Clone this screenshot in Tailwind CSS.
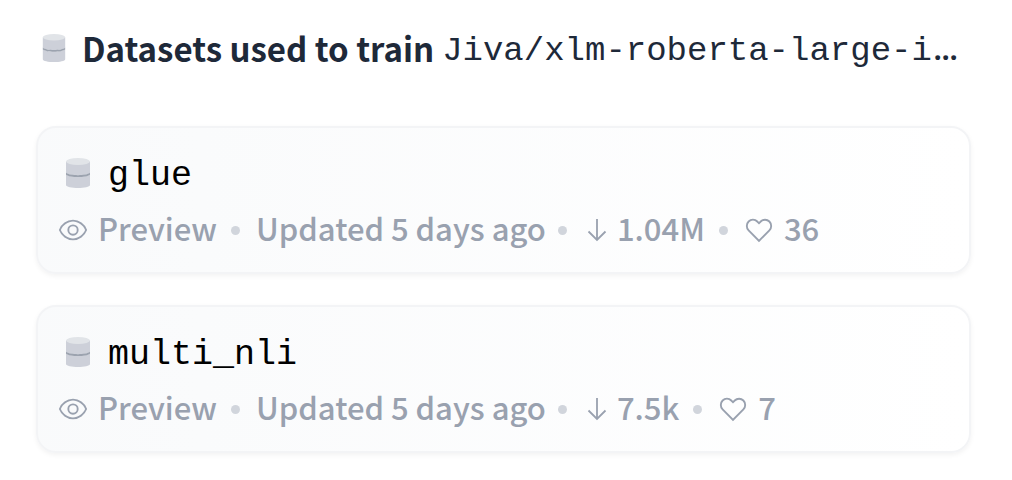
<!DOCTYPE html>
<html lang="en">
<head>
<meta charset="utf-8">
<meta name="viewport" content="width=device-width, initial-scale=1">
<title>Datasets used to train</title>
<script src="https://cdn.jsdelivr.net/npm/@tailwindcss/browser@4"></script>
</head>
<body class="bg-white font-['Noto_Sans_CJK_JP',sans-serif]">
<svg class="hidden" aria-hidden="true">
  <symbol id="db" viewBox="0 0 24 30">
    <path d="M0 16.500C4 19.500 20 19.500 24 16.500V27C24 31 0 31 0 27Z" fill="#cdd0d9"/>
    <path d="M0 3.500H24V15C20 18 4 18 0 15Z" fill="#cdd0d9"/>
    <path d="M0 14.800C4 18 20 18 24 14.800V16.700C20 19.900 4 19.900 0 16.700Z" fill="#9ca3af"/>
    <ellipse cx="12" cy="3.500" rx="12" ry="3.500" fill="#e1e4e8"/>
  </symbol>
  <symbol id="eye" viewBox="0 0 32 32">
    <path d="M30.940 15.660A16.690 16.690 0 0 0 16 5 16.690 16.690 0 0 0 1.060 15.660a1 1 0 0 0 0 .680A16.690 16.690 0 0 0 16 27a16.690 16.690 0 0 0 14.940-10.660 1 1 0 0 0 0-.680ZM16 25c-5.300 0-10.900-3.930-12.930-9C5.100 10.930 10.700 7 16 7s10.900 3.930 12.930 9C26.900 21.070 21.300 25 16 25Zm0-15a6 6 0 1 0 0 12 6 6 0 0 0 0-12Zm0 10a4 4 0 1 1 0-8 4 4 0 0 1 0 8Z" fill="currentColor"/>
  </symbol>
  <symbol id="down" viewBox="0 0 20 24">
    <path d="M10 1V22M1.500 13.500L10 22L18.500 13.500" fill="none" stroke="currentColor" stroke-width="1.800"/>
  </symbol>
  <symbol id="heart" viewBox="0 0 32 32">
    <path d="M22.450 6a5.470 5.470 0 0 1 3.910 1.640 5.700 5.700 0 0 1 0 8L16 26.130 5.640 15.640a5.700 5.700 0 0 1 0-8 5.480 5.480 0 0 1 7.820 0L16 10.240l2.530-2.580A5.440 5.440 0 0 1 22.450 6m0-2a7.470 7.470 0 0 0-5.340 2.240L16 7.360l-1.110-1.120a7.490 7.490 0 0 0-10.680 0 7.720 7.720 0 0 0 0 10.820L16 29l11.790-11.940a7.720 7.720 0 0 0 0-10.820A7.490 7.490 0 0 0 22.450 4Z" fill="currentColor"/>
  </symbol>
</svg>
<main class="pt-6 pb-7 pl-9 pr-[41px]">
  <h2 class="flex items-center h-12 pl-1.5 text-[33px] leading-[46px] text-gray-800 whitespace-nowrap">
    <svg class="w-6 h-7 mr-4 shrink-0" preserveAspectRatio="none"><use href="#db"/></svg>
    <span class="font-bold">Datasets used to train</span>
    <span class="pt-1 ml-2 font-['Liberation_Mono',monospace] text-[34px]">Jiva/xlm-roberta-large-i<span class="ml-0.5 font-['Noto_Sans',sans-serif] font-bold text-[28px]">…</span></span>
  </h2>
  <div class="mt-[54px] flex flex-col gap-[31px]">
    <a href="#glue" class="block rounded-[20px] border-2 border-gray-100 bg-linear-to-r from-gray-50 to-white shadow-[0_2px_5px_rgba(0,0,0,0.05)] pt-[21px] pl-5 pb-5">
      <h3 class="flex items-center h-12 pl-2 text-[35px] leading-[48px] text-black font-['Liberation_Mono',monospace]">
        <svg class="w-6 h-[30px] mr-[18px]"><use href="#db"/></svg><span class="pt-1.5">glue</span>
      </h3>
      <div class="flex items-center mt-[11px] h-11 text-[31px] leading-[44px] font-medium text-gray-400 whitespace-nowrap">
        <svg class="size-[30px] mr-2.5"><use href="#eye"/></svg><span class="pb-1">Preview</span>
        <span class="size-[9px] rounded-full bg-gray-300 ml-3.5 mr-4"></span><span class="pb-1">Updated 5 days ago</span>
        <span class="size-[9px] rounded-full bg-gray-300 ml-3 mr-5"></span>
        <svg class="w-5 h-6 mr-2.5"><use href="#down"/></svg><span class="pb-1">1.04M</span>
        <span class="size-[9px] rounded-full bg-gray-300 ml-3.5 mr-4"></span>
        <svg class="size-[30px] mr-2.5"><use href="#heart"/></svg><span class="pb-1">36</span>
      </div>
    </a>
    <a href="#multi_nli" class="block rounded-[20px] border-2 border-gray-100 bg-linear-to-r from-gray-50 to-white shadow-[0_2px_5px_rgba(0,0,0,0.05)] pt-[21px] pl-5 pb-5">
      <h3 class="flex items-center h-12 pl-2 text-[35px] leading-[48px] text-black font-['Liberation_Mono',monospace]">
        <svg class="w-6 h-[30px] mr-[18px]"><use href="#db"/></svg><span class="pt-1.5">multi_nli</span>
      </h3>
      <div class="flex items-center mt-[11px] h-11 text-[31px] leading-[44px] font-medium text-gray-400 whitespace-nowrap">
        <svg class="size-[30px] mr-2.5"><use href="#eye"/></svg><span class="pb-1">Preview</span>
        <span class="size-[9px] rounded-full bg-gray-300 ml-3.5 mr-4"></span><span class="pb-1">Updated 5 days ago</span>
        <span class="size-[9px] rounded-full bg-gray-300 ml-3 mr-5"></span>
        <svg class="w-5 h-6 mr-2.5"><use href="#down"/></svg><span class="pb-1">7.5k</span>
        <span class="size-[9px] rounded-full bg-gray-300 ml-3.5 mr-4"></span>
        <svg class="size-[30px] mr-2.5"><use href="#heart"/></svg><span class="pb-1">7</span>
      </div>
    </a>
  </div>
</main>
</body>
</html>
